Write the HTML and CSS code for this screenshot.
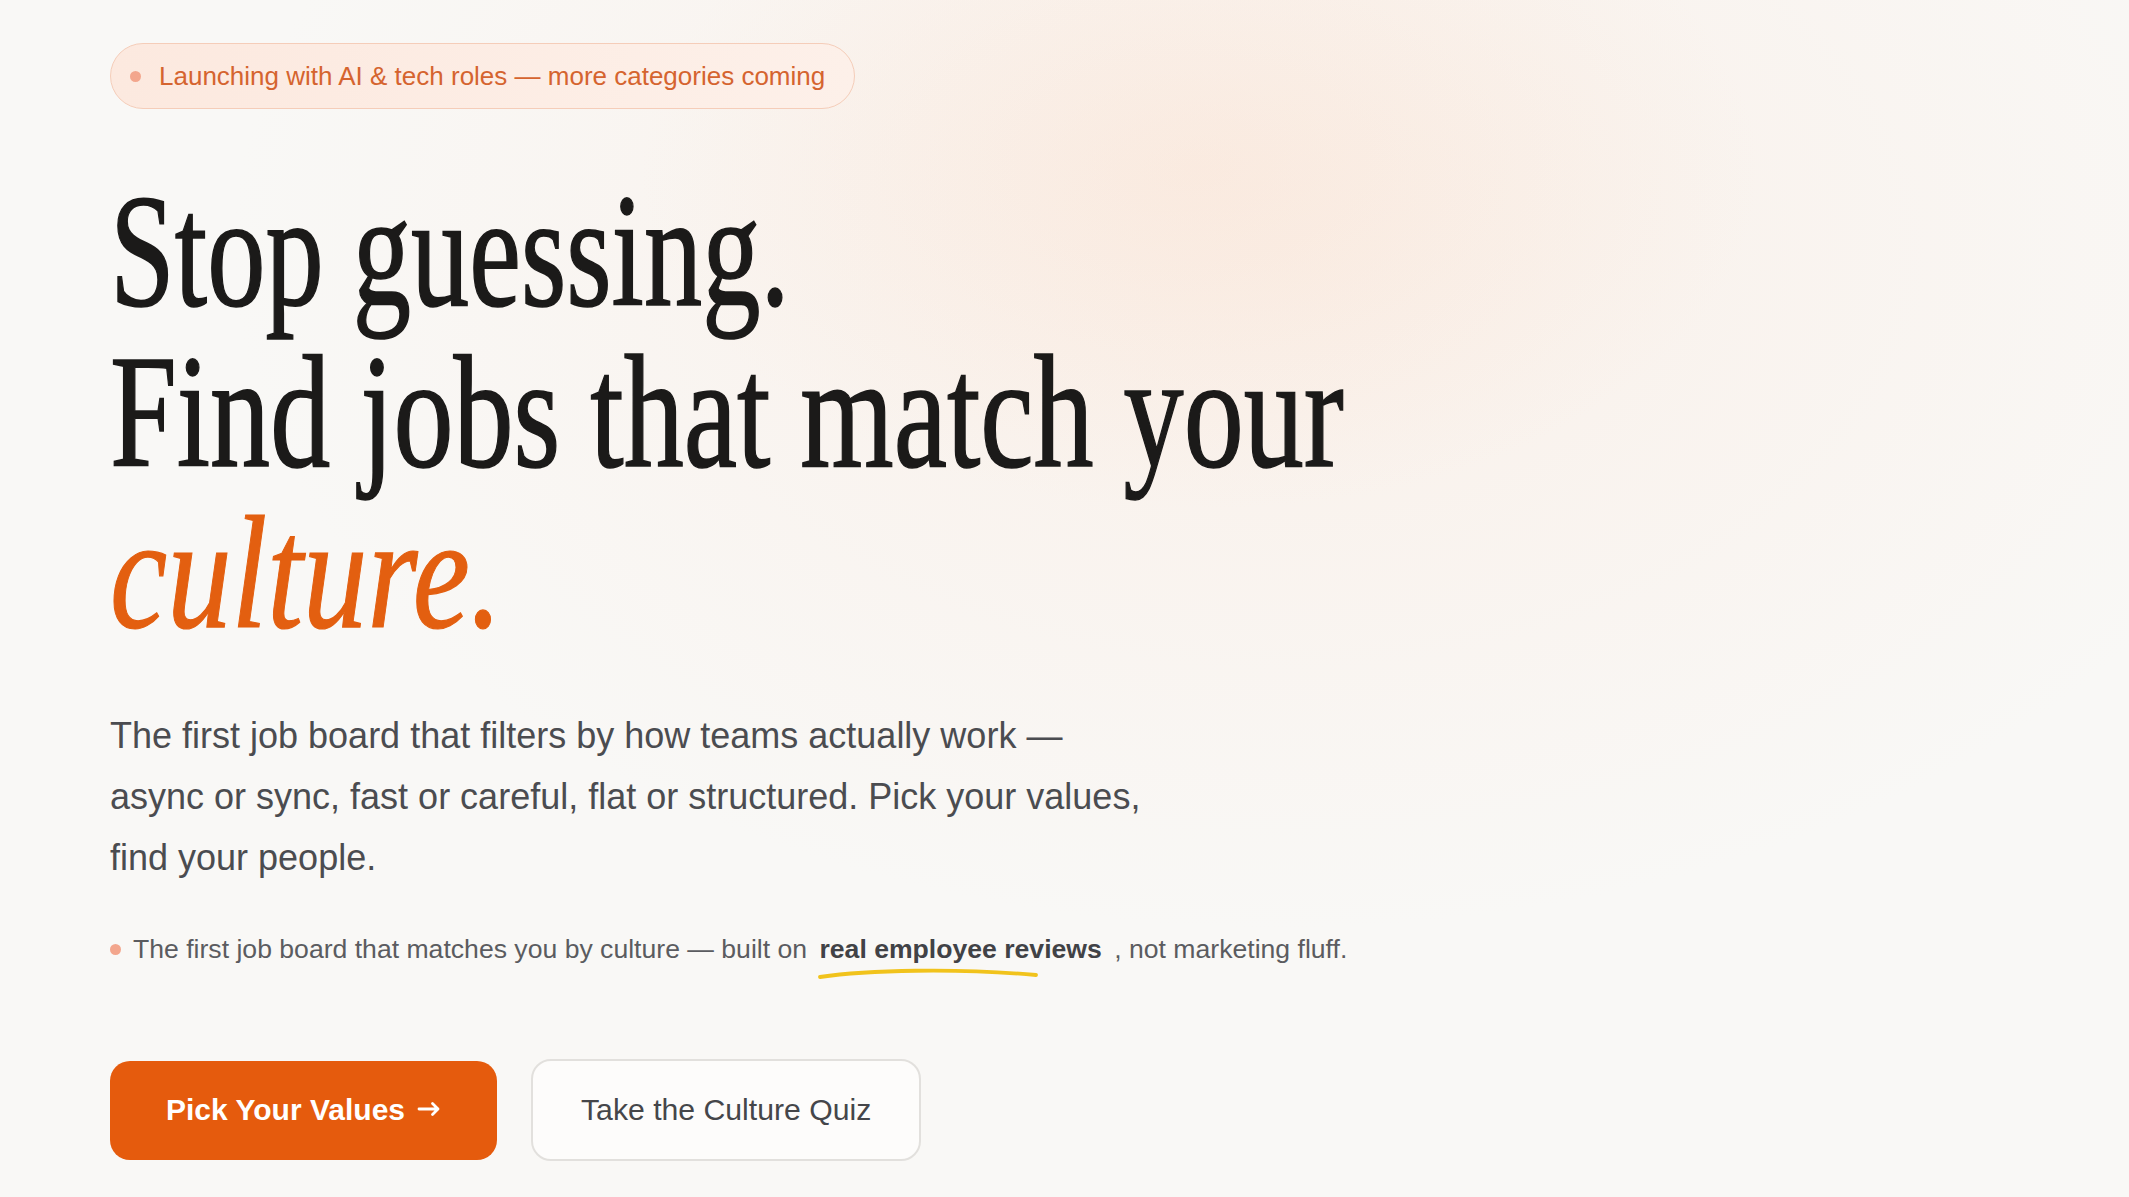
FILE: index.html
```html
<!DOCTYPE html>
<html lang="en">
<head>
<meta charset="utf-8">
<title>Find jobs that match your culture</title>
<link rel="stylesheet" href="styles.css">
</head>
<body>
<main class="hero">
  <div class="badge"><span class="badge-dot"></span><span class="badge-text">Launching with AI &amp; tech roles — more categories coming</span></div>
  <h1 class="headline">
    <span class="line roman first">Stop guessing.</span>
    <span class="line roman second">Find jobs that match your</span>
    <span class="line accent">culture.</span>
  </h1>
  <p class="lead">The first job board that filters by how teams actually work — async or sync, fast or careful, flat or structured. Pick your values, find your people.</p>
  <p class="proof"><span class="proof-dot"></span><span class="proof-text">The first job board that matches you by culture — built on <strong class="hl">real employee reviews<svg class="hl-mark" viewBox="0 0 222 14" width="222" height="14" aria-hidden="true"><path d="M3 11 C 50 4, 140 2, 219 9" fill="none" stroke="#f1c31c" stroke-width="3.8" stroke-linecap="round"/></svg></strong> , not marketing fluff.</span></p>
  <div class="actions">
    <a class="btn btn-primary" href="#">Pick Your Values<svg class="btn-arrow" viewBox="0 0 24 16" width="24" height="16" aria-hidden="true"><path d="M2 8 H21 M15.5 2.5 L21 8 L15.5 13.5" fill="none" stroke="#ffffff" stroke-width="2.8" stroke-linecap="round" stroke-linejoin="round"/></svg></a>
    <a class="btn btn-secondary" href="#">Take the Culture Quiz</a>
  </div>
</main>
</body>
</html>
```

FILE: styles.css
```css
html, body {
  margin: 0;
  padding: 0;
}

body {
  min-height: 1197px;
  background-color: #f9f8f6;
  background-image:
    radial-gradient(ellipse 560px 340px at 1200px 170px, rgba(251, 220, 200, 0.32), rgba(251, 220, 200, 0) 100%),
    radial-gradient(ellipse 1050px 680px at 1280px 250px, rgba(250, 232, 220, 0.5), rgba(250, 232, 220, 0) 100%);
  background-repeat: no-repeat;
  font-family: "Liberation Sans", Arial, sans-serif;
  color: #1a1a1a;
  overflow: hidden;
}

.hero {
  display: flex;
  flex-direction: column;
  align-items: flex-start;
  padding: 43px 0 0 110px;
}

/* Badge */
.badge {
  display: flex;
  align-items: center;
  gap: 18px;
  padding: 12.5px 29px 12.5px 19px;
  border: 1.5px solid #f5cdb9;
  border-radius: 999px;
  background: linear-gradient(90deg, #fce9df 0%, #fdf0e9 100%);
  margin-bottom: 61px;
}

.badge-dot {
  width: 11px;
  height: 11px;
  border-radius: 50%;
  background: #f3a68d;
  flex: none;
}

.badge-text {
  font-size: 26px;
  line-height: 39px;
  color: #d5642f;
}

/* Headline */
.headline {
  margin: 0 0 52px;
  font-family: "Liberation Serif", "Times New Roman", serif;
  font-weight: 400;
  font-size: 162px;
  line-height: 161px;
  color: #1b1a19;
  -webkit-text-stroke: 1.6px #1b1a19;
}

.line {
  display: block;
  white-space: nowrap;
  transform-origin: 0 0;
}

.first {
  transform: scaleX(0.719);
}

.second {
  transform: scaleX(0.741);
}

.accent {
  font-style: italic;
  color: #e35f10;
  -webkit-text-stroke: 1.2px #e35f10;
  transform: scaleX(0.795);
}

/* Lead paragraph */
.lead {
  margin: 0 0 41px;
  max-width: 1045px;
  font-size: 36px;
  line-height: 61px;
  color: #4b4c50;
}

/* Proof line */
.proof {
  display: flex;
  align-items: center;
  gap: 12px;
  margin: 0 0 90px;
  font-size: 26.6px;
  line-height: 40px;
  color: #5b5c60;
}

.proof-dot {
  width: 11px;
  height: 11px;
  border-radius: 50%;
  background: #f3a68d;
  flex: none;
}

.hl {
  position: relative;
  font-weight: 700;
  color: #414246;
  padding: 0 5px;
}

.hl-mark {
  position: absolute;
  left: 3px;
  top: calc(100% + 2px);
}

/* Buttons */
.actions {
  display: flex;
  align-items: center;
  gap: 34px;
}

.btn {
  display: inline-flex;
  align-items: center;
  justify-content: center;
  box-sizing: border-box;
  height: 99px;
  border-radius: 20px;
  text-decoration: none;
  white-space: nowrap;
}

.btn-primary {
  gap: 12px;
  padding: 0 56px;
  background: #e55b0d;
  color: #ffffff;
  font-size: 30px;
  font-weight: 700;
}

.btn-arrow {
  flex: none;
  margin-top: -2px;
}

.btn-secondary {
  height: 102px;
  padding: 0 48px;
  background: #fdfcfb;
  border: 2px solid #e2e0dd;
  color: #45464a;
  font-size: 30.2px;
}
```
